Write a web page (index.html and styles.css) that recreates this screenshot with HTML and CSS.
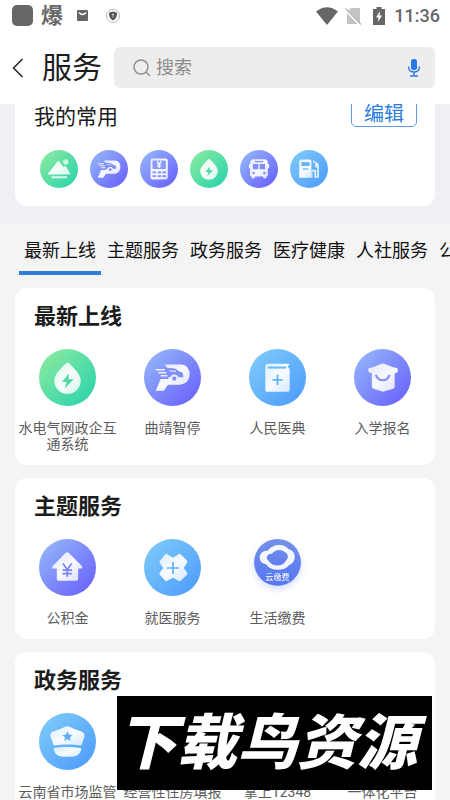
FILE: index.html
```html
<!DOCTYPE html>
<html lang="zh-CN">
<head>
<meta charset="utf-8">
<meta name="viewport" content="width=device-width, initial-scale=1">
<title>服务</title>
<link rel="stylesheet" href="styles.css">
</head>
<body>
<svg class="defs" aria-hidden="true">
  <defs>
    <linearGradient id="green" x1="0.1" y1="0.1" x2="0.9" y2="0.9"><stop offset="0" stop-color="#86e9a0"/><stop offset="1" stop-color="#2fd4ac"/></linearGradient>
    <linearGradient id="violet" x1="0.1" y1="0.1" x2="0.9" y2="0.9"><stop offset="0" stop-color="#92b2f9"/><stop offset="1" stop-color="#6a64fb"/></linearGradient>
    <linearGradient id="blue" x1="0.1" y1="0.1" x2="0.9" y2="0.9"><stop offset="0" stop-color="#7cc8fa"/><stop offset="1" stop-color="#509efb"/></linearGradient>
    <linearGradient id="royal" x1="0" y1="0" x2="0" y2="1"><stop offset="0" stop-color="#7590ea"/><stop offset="1" stop-color="#5475f3"/></linearGradient>
    <linearGradient id="pale" x1="0" y1="0" x2="1" y2="1"><stop offset="0" stop-color="#fff" stop-opacity="0.75"/><stop offset="0.5" stop-color="#fff" stop-opacity="0.95"/><stop offset="1" stop-color="#fff" stop-opacity="0.75"/></linearGradient>
  </defs>
  <symbol id="drop" viewBox="0 0 56 56">
    <circle cx="28" cy="28" r="28" fill="url(#green)"/>
    <path d="M26.5 14q1.5-1.5 3 0C34 18.5 41 25 41 31a13 13 0 0 1-26 0c0-6 7-12.500 11.500-17z" fill="url(#pale)"/>
    <path d="M29.500 24l-7 8.500h4.500l-1.500 6 8.500-8.800h-5z" fill="#4fd9a5"/>
  </symbol>
  <symbol id="parking" viewBox="0 0 56 56">
    <circle cx="28" cy="28" r="28" fill="url(#violet)"/>
    <path d="M20.500 15.300H36c12 0 12 19.700-1 19.700H23.500L19.500 41H11.500l4.800-11.500H24L23.500 19.500z" fill="url(#pale)"/>
    <path d="M20 19.200c7-1.200 11.500-.5 14.500 2.800 3.500.3 4.500 2 4 5.800h-5c-1.500-3.500-6-3.500-7.500 0h-6z" fill="#808ffa"/>
    <path d="M25 21.500l6.500.5" stroke="#dfe4ff" stroke-width="1.200"/>
    <circle cx="29.800" cy="29" r="2.900" fill="#7f8cfa" stroke="#edf0ff" stroke-width="1.600"/>
    <path d="M11.500 20.300h9M14 23.300h8M16.500 26.300h6.500" stroke="#edf0ff" stroke-width="1.500"/>
  </symbol>
  <symbol id="book" viewBox="0 0 56 56">
    <circle cx="28" cy="28" r="28" fill="url(#blue)"/>
    <path d="M18.500 14.500H40l-2 3 2 2.500v19.500q0 2.500-2.500 2.500h-19Q16 42 16 39.500V17q0-2.500 2.500-2.500z" fill="url(#pale)"/>
    <path d="M18.500 18.200h18" stroke="#6cb8fa" stroke-width="2"/>
    <path d="M23 30.300h10M28 25.300v10" stroke="#62b0fb" stroke-width="1.800"/>
  </symbol>
  <symbol id="school" viewBox="0 0 56 56">
    <circle cx="28" cy="28" r="28" fill="url(#violet)"/>
    <path d="M27 14.500q1.300-.6 2.600 0L40 18.500h1.500q1.500 0 1.500 1.500v2q0 1.500-3 1.500V37q0 1.500-1.500 2L28.500 42 19 39q-1.500-.5-1.500-2V23.500q-3.500-.5-3.500-2V20q0-1.500 1.500-1.500H17z" fill="url(#pale)"/>
    <path d="M21.500 25.500c2.500 7 11 7 13.500 0" fill="none" stroke="#7f8cfa" stroke-width="2"/>
  </symbol>
  <symbol id="house" viewBox="0 0 56 56">
    <circle cx="28" cy="28" r="28" fill="url(#violet)"/>
    <path d="M26 13.800q1.700-1.500 3.400 0L42 26.500q1.500 2.500-1 2.500h-2.500v10q0 2-2 2h-17q-2 0-2-2V29h-3q-2.500 0-1-2.500z" fill="url(#pale)"/>
    <path d="M23.500 24l4.300 6 4.300-6M27.800 30v7M23 30.500h9.500M23 34h9.500" fill="none" stroke="#7b85fa" stroke-width="1.700"/>
  </symbol>
  <symbol id="medical" viewBox="0 0 56 56">
    <circle cx="28" cy="28" r="28" fill="url(#blue)"/>
    <path d="M23 15l5.500 3.500L34 15q1-.8 2 0l6.300 6.300q.8 1 0 2L39 28.500l3.300 4.500q.8 1 0 2L36 41q-1 .8-2 0l-5.500-3-5.500 3q-1 .8-2 0l-5.500-6q-.8-1 0-2l3.500-4.500-3.500-5q-.8-1 0-2L21 15q1-.8 2 0z" fill="url(#pale)"/>
    <path d="M22.500 28.500h12M28.500 22.500v12" stroke="#62b0fb" stroke-width="1.700"/>
  </symbol>
  <symbol id="cloudpay" viewBox="0 0 56 56">
    <circle cx="28" cy="23" r="23" fill="url(#royal)"/>
    <path fill-rule="evenodd" d="M18.500 11.500C23 4.500 35 4 39 10c5 1 7 6 5.500 10.500-1 3-3 4.500-5 5-5 6.500-18 6.500-22.500-.5-4-.5-7-3.500-6.500-7.500.4-4 4-6.500 8-6zM17.500 18c0 1.500.6 2.700 2 3.500 3.500 6 13.500 6 16.500 0 3.500-3 2.500-6.500-.5-8.500-4.500-3.500-10-2.500-13 1.500-2.500 0-5 1.500-5 3.500z" fill="#fff" fill-opacity="0.930"/>
    <text x="28" y="40" text-anchor="middle" class="tiny" fill="#fff">云缴费</text>
  </symbol>
  <symbol id="officer" viewBox="0 0 56 56">
    <circle cx="28" cy="28" r="28" fill="url(#blue)"/>
    <path d="M25.500 13.500q2.300-1.200 4.600 0c4 2.500 8 3.200 12 4.800 2.500 1 3.500 4 2 6.500l-2.500 7.200c-8-1.500-19.500-1.500-27 0L12 24.800c-1.500-2.500-1-5.500 1.500-6.500 4-1.600 8-2.300 12-4.800z" fill="url(#pale)"/>
    <path d="M14.500 34.500c8-1.500 18.500-1.500 27 0 0 4-2.500 7-6 8q-7.500 1.200-15 0c-3.500-1-6-4-6-8z" fill="url(#pale)"/>
    <path d="M28 18l1.500 3.100 3.500.5-2.500 2.400.6 3.500-3.100-1.700-3.100 1.700.6-3.500-2.500-2.400 3.500-.5z" fill="#62b0fb"/>
  </symbol>
  <symbol id="scenery" viewBox="0 0 56 56">
    <circle cx="28" cy="28" r="28" fill="url(#green)"/>
    <path d="M12.500 36q-1.500 0-.5-1.500L25.500 17q1.500-1.500 3 0l6 8.500 2-1.500q1-.8 2 .5l6 10q.7 1.500-1 1.500z" fill="url(#pale)"/>
    <circle cx="38" cy="17.500" r="4" fill="#c9f7e0"/>
    <rect x="17" y="38.500" width="23" height="3" rx="1" fill="#dcfaee"/>
  </symbol>
  <symbol id="meter" viewBox="0 0 56 56">
    <circle cx="28" cy="28" r="28" fill="url(#violet)"/>
    <rect x="15.500" y="12.500" width="25.500" height="31" rx="3" fill="url(#pale)"/>
    <rect x="18.500" y="15.500" width="19.500" height="12.500" rx="1" fill="#8798fa"/>
    <path d="M25 16.500l3.200 4 3.200-4M28.200 20.500v6M25 21h6.500M25 24h6.500" fill="none" stroke="#fff" stroke-width="1.700"/>
    <path d="M18.500 33h5M26 33h5M33 33h5M18.500 38.500h5M26 38.500h5M33 38.500h5" stroke="#7f8cfa" stroke-width="2.500"/>
  </symbol>
  <symbol id="bus" viewBox="0 0 56 56">
    <circle cx="28" cy="28" r="28" fill="url(#violet)"/>
    <path d="M20 13.500h16q5 0 5 5v2q2 0 2 2v3q0 1.500-2 2V37q0 2-2 2v1q0 2-2 2h-1q-2 0-2-3H22q0 3-2 3h-1q-2 0-2-3-2 0-2-2v-9.500q-2-.5-2-2v-3q0-2 2-2v-2q0-5 5-5z" fill="url(#pale)"/>
    <path d="M22 17.200h12" stroke="#7f8cfa" stroke-width="1.800"/>
    <path d="M19 20.500h8v8h-8zM29 20.500h8v8h-8z" fill="#7f8cfa"/>
    <circle cx="20" cy="34" r="1.800" fill="#7f8cfa"/><circle cx="36" cy="34" r="1.800" fill="#7f8cfa"/>
  </symbol>
  <symbol id="fuel" viewBox="0 0 56 56">
    <circle cx="28" cy="28" r="28" fill="url(#blue)"/>
    <path d="M16 14h13q2.500 0 2.500 2.500V41h-18V16.500Q13.500 14 16 14z" fill="url(#pale)"/>
    <path d="M17 18h12v5.500H17z" fill="#62b0fb"/><path d="M19 28h8" stroke="#62b0fb" stroke-width="1.800"/>
    <path d="M34 15l7 4.500q1.500 1 1.500 2.500v18q0 1-1 1h-4.500q-1 0-1-1v-8.500h-3V41h-1.500V29H37q1.500 0 1.500 1v8.500h1.500V26l-3-1.500v-5l-3-2z" fill="#e2f1ff"/>
  </symbol>
</svg>

<header class="top">
  <div class="status">
    <div class="status-group">
      <span class="app-dot"></span>
      <span class="notice">爆</span>
      <svg class="mail" viewBox="0 0 11 11" aria-hidden="true"><rect width="11" height="11" rx="1" fill="#666"/><path d="M2 2.500q3.500 4 7 0" fill="none" stroke="#fff" stroke-width="1.300"/></svg>
      <svg class="shield" viewBox="0 0 14 14" aria-hidden="true"><circle cx="7" cy="7" r="6.500" fill="#fff" stroke="#999" stroke-width="0.700"/><path d="M7 2.500l4 1.200c0 4-1 6.300-4 7.800-3-1.500-4-3.800-4-7.800z" fill="#555"/><path d="M7 4.500v4M5.800 5.500h2.400" stroke="#ccc"/></svg>
    </div>
    <div class="status-group">
      <svg class="wifi" viewBox="0 0 22 18" aria-hidden="true"><path d="M0 4.500Q11-4 22 4.500L11 18z" fill="#666"/></svg>
      <svg class="sim" viewBox="0 0 17 18" aria-hidden="true"><path d="M6 1h9v15L3 4zM2 6l10.500 11H2z" fill="#c4c4c4"/><path d="M.5 1.500l15.500 16" stroke="#b4b4b4" stroke-width="1.300"/></svg>
      <svg class="battery" viewBox="0 0 12 18" aria-hidden="true"><path d="M3.500 0h5v2H12v16H0V2h3.500z" fill="#666"/><path d="M7 4l-4 6.500h2.500L5 15l4-6.500H6.500z" fill="#fff"/></svg>
      <time class="clock">11:36</time>
    </div>
  </div>
  <div class="bar">
    <button class="back" type="button" aria-label="返回"><svg viewBox="0 0 12 20" aria-hidden="true"><path d="M10.500 1L1.500 10l9 9" fill="none" stroke="#222" stroke-width="1.500"/></svg></button>
    <h1 class="page-title">服务</h1>
    <form class="search">
      <svg class="lens" viewBox="0 0 18 18" aria-hidden="true"><circle cx="8" cy="8" r="7" fill="none" stroke="#8b8b8b" stroke-width="1.400"/><path d="M13 13l4 4" stroke="#8b8b8b" stroke-width="1.500"/></svg>
      <input class="search-input" type="text" placeholder="搜索" aria-label="搜索">
      <button class="mic" type="button" aria-label="语音"><svg viewBox="0 0 12 18" aria-hidden="true"><rect x="3" y="0" width="6" height="11" rx="2.500" fill="#2878e8"/><path d="M.7 7.500v1c0 6 10.600 6 10.600 0v-1M6 13v4M2 17h8" fill="none" stroke="#2878e8" stroke-width="1.400"/></svg></button>
    </form>
  </div>
</header>

<main class="content">
  <section class="frequent">
    <div class="frequent-card">
      <div class="frequent-head">
        <h2 class="frequent-title">我的常用</h2>
        <button class="edit" type="button">编辑</button>
      </div>
      <div class="shortcuts">
        <a href="#" aria-label="景区"><svg><use href="#scenery"/></svg></a>
        <a href="#" aria-label="停车"><svg><use href="#parking"/></svg></a>
        <a href="#" aria-label="缴费"><svg><use href="#meter"/></svg></a>
        <a href="#" aria-label="水电气"><svg><use href="#drop"/></svg></a>
        <a href="#" aria-label="公交"><svg><use href="#bus"/></svg></a>
        <a href="#" aria-label="加油"><svg><use href="#fuel"/></svg></a>
      </div>
    </div>
  </section>

  <nav class="tabs">
    <a class="tab active" href="#new">最新上线</a>
    <a class="tab" href="#theme">主题服务</a>
    <a class="tab" href="#gov">政务服务</a>
    <a class="tab" href="#">医疗健康</a>
    <a class="tab" href="#">人社服务</a>
    <a class="tab" href="#">公</a>
  </nav>

  <div class="cards">
    <section class="card" id="new">
      <h2 class="card-title">最新上线</h2>
      <div class="grid">
        <a class="item" href="#"><svg><use href="#drop"/></svg><span>水电气网政企互通系统</span></a>
        <a class="item" href="#"><svg><use href="#parking"/></svg><span>曲靖智停</span></a>
        <a class="item" href="#"><svg><use href="#book"/></svg><span>人民医典</span></a>
        <a class="item" href="#"><svg><use href="#school"/></svg><span>入学报名</span></a>
      </div>
    </section>
    <section class="card" id="theme">
      <h2 class="card-title">主题服务</h2>
      <div class="grid">
        <a class="item" href="#"><svg><use href="#house"/></svg><span>公积金</span></a>
        <a class="item" href="#"><svg><use href="#medical"/></svg><span>就医服务</span></a>
        <a class="item" href="#"><svg class="glow"><use href="#cloudpay"/></svg><span>生活缴费</span></a>
      </div>
    </section>
    <section class="card" id="gov">
      <h2 class="card-title">政务服务</h2>
      <div class="grid">
        <a class="item" href="#"><svg><use href="#officer"/></svg><span>云南省市场监管</span></a>
        <a class="item" href="#"><svg><use href="#book"/></svg><span>经营性住房填报</span></a>
        <a class="item" href="#"><svg><use href="#house"/></svg><span>掌上12348</span></a>
        <a class="item" href="#"><svg><use href="#medical"/></svg><span>一体化平台</span></a>
      </div>
    </section>
  </div>
</main>

<aside class="banner">下载鸟资源</aside>
</body>
</html>
```
FILE: styles.css
```css
* {
  box-sizing: border-box;
}

body {
  position: relative;
  display: flex;
  flex-direction: column;
  height: 100vh;
  margin: 0;
  overflow: hidden;
  background: #f4f4f4;
  color: #1c1c1c;
  font-family: Roboto, "Noto Sans CJK SC", sans-serif;
}

h1,
h2 {
  margin: 0;
}

a {
  color: inherit;
  text-decoration: none;
}

button {
  padding: 0;
  border: 0;
  background: none;
  font: inherit;
}

svg {
  display: block;
}

.defs {
  position: absolute;
  width: 0;
  height: 0;
}

.tiny {
  font-size: 8px;
}

/* Header */
.top {
  z-index: 1;
  flex: none;
  padding-bottom: 16px;
  background: #fff;
}

.status {
  display: flex;
  justify-content: space-between;
  height: 31px;
  margin-bottom: 16px;
  padding: 0 10px 0 12px;
  color: #666;
}

.status-group {
  display: flex;
  align-items: center;
}

.app-dot {
  width: 21px;
  height: 21px;
  border-radius: 5px;
  background: #666;
}

.notice {
  margin-left: 8px;
  font-size: 22px;
  font-weight: 700;
  line-height: 31px;
}

.mail {
  width: 11px;
  height: 11px;
  margin-left: 14px;
}

.shield {
  width: 14px;
  height: 14px;
  margin-left: 18px;
}

.wifi {
  width: 22px;
  height: 18px;
}

.sim {
  width: 17px;
  height: 18px;
  margin-left: 7px;
}

.battery {
  width: 12px;
  height: 18px;
  margin-left: 11px;
}

.clock {
  margin-left: 9px;
  font-size: 18px;
  font-weight: 500;
}

.bar {
  display: flex;
  align-items: center;
  padding: 0 15px 0 12px;
}

.back svg {
  width: 12px;
  height: 20px;
}

.page-title {
  margin: 0 12px 0 18px;
  font-size: 30px;
  font-weight: 400;
  line-height: 41px;
}

.search {
  display: flex;
  flex: 1;
  align-items: center;
  height: 41px;
  padding: 0 15px 0 19px;
  border-radius: 6px;
  background: #ededed;
}

.lens {
  flex: none;
  width: 18px;
  height: 18px;
}

.search-input {
  flex: 1;
  min-width: 0;
  margin-left: 5px;
  padding: 0;
  border: 0;
  outline: 0;
  background: none;
  font: inherit;
  font-size: 18px;
}

.search-input::placeholder {
  color: #8b8b8b;
}

.mic svg {
  width: 12px;
  height: 18px;
}

/* Frequently used */
.content {
  flex: 1;
  min-height: 0;
  overflow: hidden;
}

.frequent {
  padding: 0 15px 18px;
  background: #eef0f3;
}

.frequent-card {
  margin-top: -12px;
  padding: 0 18px 18px 19px;
  border-radius: 0 0 12px 12px;
  background: #fff;
}

.frequent-head {
  display: flex;
  align-items: flex-end;
  justify-content: space-between;
}

.frequent-title {
  font-size: 21px;
  font-weight: 400;
  line-height: 28px;
}

.edit {
  width: 66px;
  height: 35px;
  margin-bottom: 4px;
  padding-top: 8px;
  border: 1px solid #5c9bea;
  border-radius: 5px;
  color: #2b7de1;
  font-size: 20px;
  line-height: 26px;
}

.shortcuts {
  display: flex;
  gap: 12px;
  padding: 19px 0 0 6px;
}

.shortcuts svg {
  width: 38px;
  height: 38px;
}

/* Category tabs */
.tabs {
  display: flex;
  gap: 1px;
  padding: 9px 0 13px 19px;
  overflow: hidden;
}

.tab {
  flex: none;
  padding: 0 5px 2px;
  border-bottom: 4px solid transparent;
  color: #111;
  font-size: 18px;
  line-height: 36px;
}

.tab.active {
  border-color: #2f7dd8;
}

/* Service cards */
.cards {
  display: flex;
  flex-direction: column;
  gap: 13px;
  padding: 0 15px;
}

.card {
  padding-bottom: 13px;
  border-radius: 12px;
  background: #fff;
}

.card-title {
  padding: 13px 19px 16px;
  font-size: 22px;
  font-weight: 700;
  line-height: 32px;
}

.grid {
  display: grid;
  grid-template-columns: repeat(4, 1fr);
}

.item {
  display: flex;
  flex-direction: column;
  align-items: center;
  gap: 14px;
  padding: 0 3px;
  color: #5c5c5c;
  font-size: 14px;
  line-height: 16px;
  text-align: center;
}

.item svg {
  width: 57px;
  height: 57px;
}

.item .glow {
  overflow: visible;
  filter: drop-shadow(0 3px 3px #5475f340);
}

/* Floating banner */
.banner {
  position: absolute;
  right: 18px;
  bottom: 10px;
  width: 315px;
  padding: 2px 15px 0 0;
  background: #000;
  color: #fff;
  font-size: 60px;
  font-style: italic;
  font-weight: 900;
  line-height: 92px;
  text-align: center;
  white-space: nowrap;
}
```
